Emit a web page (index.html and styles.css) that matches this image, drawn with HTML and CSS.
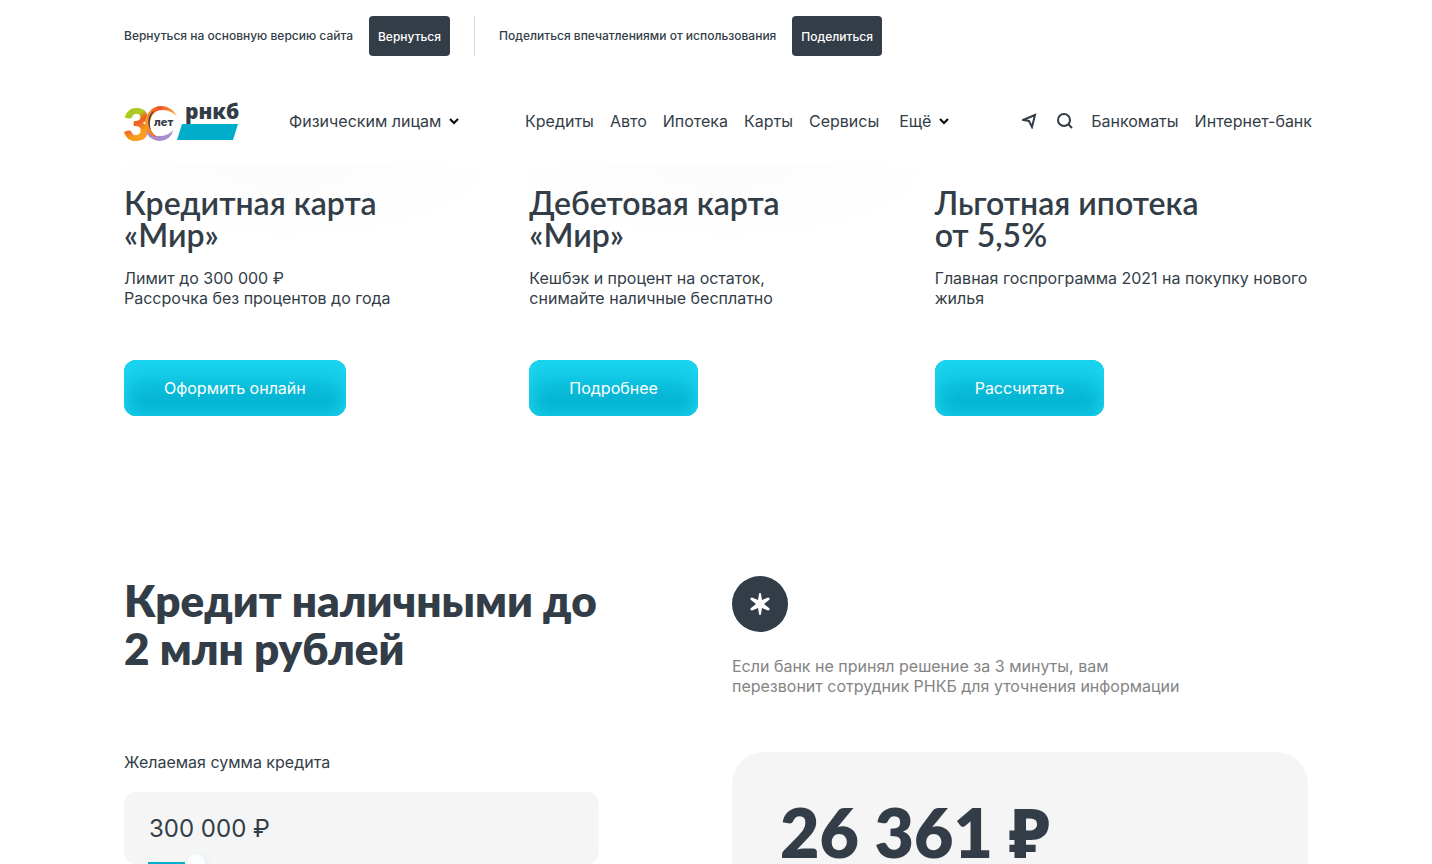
FILE: index.html
```html
<!DOCTYPE html>
<html lang="ru">
<head>
  <meta charset="UTF-8">
  <meta name="viewport" content="width=device-width, initial-scale=1.0">
  <title>РНКБ</title>
  <link rel="stylesheet" href="styles.css">
</head>
<body>
  <!-- Beta bar -->
  <div class="topbar wrap">
    <span class="topbar-text">Вернуться на основную версию сайта</span>
    <button class="topbar-btn" type="button">Вернуться</button>
    <span class="topbar-line"></span>
    <span class="topbar-text">Поделиться впечатлениями от использования</span>
    <button class="topbar-btn" type="button">Поделиться</button>
  </div>

  <!-- Header -->
  <header class="header wrap">
    <a class="logo" href="#" aria-label="РНКБ">
      <svg width="116" height="44" viewBox="0 0 116 44">
        <defs>
          <linearGradient id="three" x1="0" y1="0" x2="0.3" y2="1">
            <stop offset="0.2" stop-color="#8cc63f"/>
            <stop offset="0.45" stop-color="#b5cc18"/>
            <stop offset="0.58" stop-color="#ee5a24"/>
            <stop offset="0.8" stop-color="#f99d1c"/>
          </linearGradient>
          <linearGradient id="ring" x1="0" y1="0" x2="1" y2="0">
            <stop offset="0" stop-color="#f9a01b"/>
            <stop offset="0.45" stop-color="#ee4f2a"/>
            <stop offset="1" stop-color="#fbb034"/>
          </linearGradient>
        </defs>
        <text class="logo-three" x="-1" y="42" fill="url(#three)">3</text>
        <path d="M22 30c3 5 8 7 13 7 6 0 11-2 14-6-1 7-7 11-14 11-7-1-13-5-13-12z" fill="#a98bd0"/>
        <path d="M53 17C49 10 43 7 37 7 28 7 21 15 21 25c0 7 5 12 12 13-5-4-7-8-7-13 0-8 5-14 12-14 6 0 10 2 15 6z" fill="url(#ring)"/>
        <path d="M31 11c-5 5-7 13-4 20-4-5-4-15 4-20z" fill="#26345a"/>
        <path d="M58 25h56l-5 16H53z" fill="#00aecb"/>
        <text class="logo-let" x="30" y="27">лет</text>
        <text class="logo-name" x="61" y="20">рнкб</text>
      </svg>
    </a>
    <a class="segment" href="#">Физическим лицам
      <svg class="arrow" width="10" height="8" viewBox="0 0 10 8"><path d="M1 2l4 4 4-4"/></svg>
    </a>
    <nav class="nav">
      <a href="#">Кредиты</a>
      <a href="#">Авто</a>
      <a href="#">Ипотека</a>
      <a href="#">Карты</a>
      <a href="#">Сервисы</a>
      <a class="more" href="#">Ещё
        <svg class="arrow" width="10" height="8" viewBox="0 0 10 8"><path d="M1 2l4 4 4-4"/></svg>
      </a>
    </nav>
    <div class="tools">
      <a class="icon" href="#" aria-label="Местоположение">
        <svg width="16" height="16" viewBox="0 0 16 16"><path d="M1 7l12-5-3 12-3-6z"/></svg>
      </a>
      <button class="icon" type="button" aria-label="Поиск">
        <svg width="18" height="18" viewBox="0 0 18 18"><circle cx="8" cy="8" r="6"/><path d="M12 12l4 4"/></svg>
      </button>
      <a href="#">Банкоматы</a>
      <a href="#">Интернет-банк</a>
    </div>
  </header>

  <main>
    <!-- Products -->
    <section class="cards wrap">
      <article class="card">
        <h3>Кредитная карта<br>«Мир»</h3>
        <p>Лимит до 300 000 ₽<br>Рассрочка без процентов до года</p>
        <button class="btn" type="button">Оформить онлайн</button>
      </article>
      <article class="card">
        <h3>Дебетовая карта<br>«Мир»</h3>
        <p>Кешбэк и процент на остаток,<br>снимайте наличные бесплатно</p>
        <button class="btn" type="button">Подробнее</button>
      </article>
      <article class="card">
        <h3>Льготная ипотека<br>от 5,5%</h3>
        <p>Главная госпрограмма 2021 на покупку нового жилья</p>
        <button class="btn" type="button">Рассчитать</button>
      </article>
    </section>

    <!-- Loan calculator -->
    <section class="loan wrap">
      <h2>Кредит наличными до<br>2 млн рублей</h2>
      <div class="note">
        <span class="note-icon">
          <svg width="24" height="24" viewBox="0 0 24 24"><path d="M12 1q1 0 1 1l1 6 6-2.500q1 0 1.500 1t-.5 1.500L16 12l5 4q1 .5.500 1.500t-1.500 1L14 16l-1 6q0 1-1 1t-1-1l-1-6-6 2.500q-1 0-1.500-1t.5-1.500L8 12 3 8q-1-.5-.5-1.500t1.500-1L10 8l1-6q0-1 1-1z"/></svg>
        </span>
        <p>Если банк не принял решение за 3 минуты, вам<br>перезвонит сотрудник РНКБ для уточнения информации</p>
      </div>
      <form class="calc">
        <label for="sum">Желаемая сумма кредита</label>
        <div class="field">
          <input class="sum" id="sum" type="text" value="300 000 ₽">
          <input class="range" type="range" min="0" max="2000" value="191" aria-label="Сумма кредита">
        </div>
      </form>
      <div class="result">
        <strong>26 361 <span class="rub">₽</span></strong>
      </div>
    </section>
  </main>
</body>
</html>
```
FILE: styles.css
```css
* {
  box-sizing: border-box;
}
body {
  margin: 0;
  font-family: Inter, "Liberation Sans", sans-serif;
  font-size: 16px;
  line-height: 20px;
  color: #333d47;
  background: #fff;
}
a {
  color: inherit;
  text-decoration: none;
}
button {
  font-family: inherit;
  color: inherit;
  border: none;
  cursor: pointer;
}
.wrap {
  max-width: 1184px;
  margin: 0 auto;
}

.topbar {
  display: flex;
  align-items: center;
  gap: 16px;
  padding-top: 16px;
}
.topbar-text {
  font-size: 12px;
  font-weight: 500;
}
.topbar-btn {
  height: 40px;
  padding: 0 9px;
  font-size: 12px;
  font-weight: 500;
  color: #fff;
  background: #333d47;
  border-radius: 4px;
}
.topbar-line {
  width: 1px;
  height: 40px;
  margin: 0 8px;
  background: #d9dcde;
}

.header {
  display: flex;
  align-items: center;
  height: 109px;
  padding-top: 20px;
}
.logo {
  display: flex;
  width: 165px;
}
.logo svg {
  overflow: visible;
}
.logo-three {
  font: 800 46px Lato, sans-serif;
}
.logo-let {
  font: 800 11px Inter, sans-serif;
  fill: #333d47;
}
.logo-name {
  font: 900 21px "Noto Sans", sans-serif;
  fill: #333d47;
}
.segment,
.more {
  display: flex;
  align-items: center;
  gap: 8px;
}
.segment {
  width: 236px;
}
.arrow {
  fill: none;
  stroke: #000;
  stroke-width: 2;
}
.nav {
  display: flex;
  gap: 16px;
}
.more {
  margin-left: 4px;
}
.tools {
  display: flex;
  align-items: center;
  gap: 16px;
  margin-left: auto;
  margin-right: -4px;
}
.icon {
  display: flex;
  padding: 0 1px;
  background: none;
}
.icon svg {
  fill: none;
  stroke: #333d47;
  stroke-width: 2;
}

.cards {
  display: grid;
  grid-template-columns: repeat(3, 1fr);
  gap: 32px;
  padding-top: 22px;
  background:
    radial-gradient(220px 80px at 160px 0, #fcfcfc, transparent) no-repeat,
    radial-gradient(220px 80px at 600px 0, #fcfcfc, transparent) no-repeat;
}
h2,
h3,
p {
  margin: 0;
}
h3 {
  font-family: Lato, sans-serif;
  font-size: 32px;
  line-height: 32px;
  font-weight: 600;
}
.card p {
  min-height: 40px;
  margin: 17px 0 52px;
}
.btn {
  height: 56px;
  padding: 0 40px;
  font-size: 16px;
  color: #fff;
  background: #06b5d3;
  border-radius: 12px;
  box-shadow: inset 0 20px 24px #1bd5f0, inset 0 -4px 12px #12c8e2;
}

.loan {
  display: grid;
  grid-template-columns: 1fr 1fr;
  column-gap: 32px;
  padding-top: 160px;
}
h2 {
  font-family: Lato, sans-serif;
  font-size: 44px;
  line-height: 48px;
  font-weight: 800;
}
.note {
  min-height: 176px;
}
.note-icon {
  display: flex;
  align-items: center;
  justify-content: center;
  width: 56px;
  height: 56px;
  margin-bottom: 24px;
  background: #333d47;
  border-radius: 50%;
}
.note-icon svg {
  fill: #fff;
}
.note p {
  color: #848484;
}
.calc {
  max-width: 475px;
}
.calc label {
  display: block;
  margin-bottom: 20px;
}
.field {
  height: 72px;
  padding: 20px 24px 0;
  background: #f5f5f5;
  border-radius: 12px;
}
.sum {
  display: block;
  width: 100%;
  height: 32px;
  padding: 0 1px;
  border: none;
  background: none;
  font-family: inherit;
  font-size: 24px;
  color: inherit;
}
.range {
  display: block;
  appearance: none;
  width: 100%;
  height: 20px;
  margin: 9px 0 0;
  background: linear-gradient(to right, #00aecb 37px, transparent 37px) center / 100% 2px no-repeat;
}
.range::-webkit-slider-thumb {
  appearance: none;
  width: 18px;
  height: 18px;
  border-radius: 50%;
  background: #fafeff;
  box-shadow: 2px 2px 6px #d5eff5;
}
.result {
  padding: 40px 48px;
  background: #f5f5f5;
  border-radius: 32px;
}
.result strong {
  font-family: Lato, sans-serif;
  font-size: 68px;
  line-height: 80px;
  font-weight: 800;
}
.result .rub {
  font-family: "Noto Sans", sans-serif;
}
```
